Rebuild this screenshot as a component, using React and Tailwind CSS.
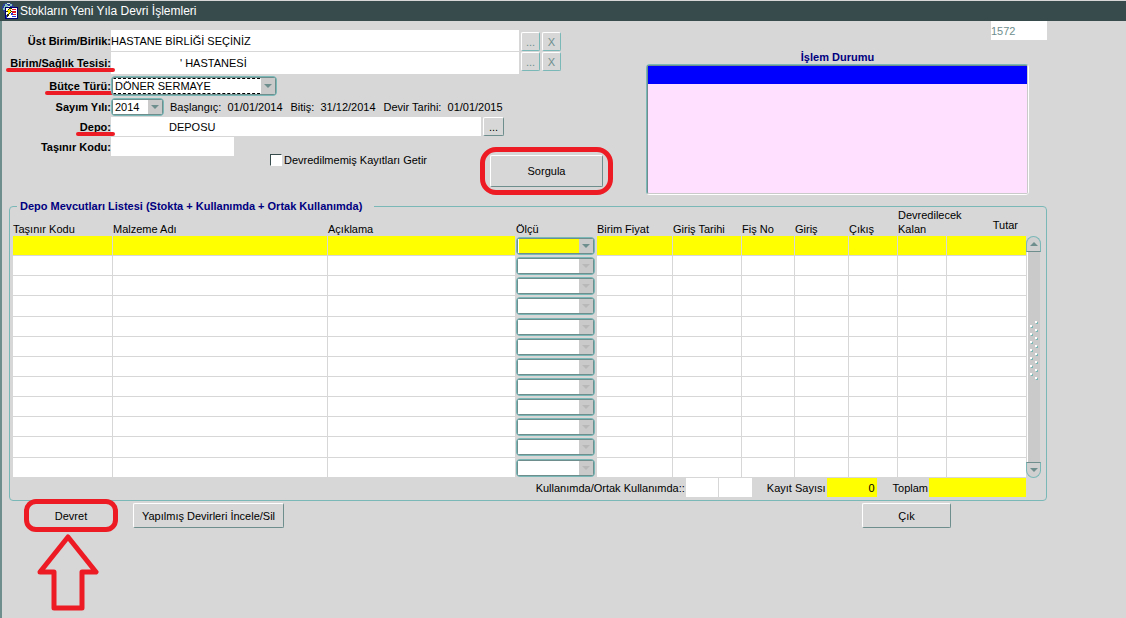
import React, { useState } from 'react'
import clsx from 'clsx'

const columns = [
  { id: 'kod', title: 'Taşınır Kodu', width: 'w-[100px]' },
  { id: 'ad', title: 'Malzeme Adı', width: '' },
  { id: 'aciklama', title: 'Açıklama', width: 'w-[188px]' },
  { id: 'olcu', title: 'Ölçü', width: 'w-[81px]' },
  { id: 'fiyat', title: 'Birim Fiyat', width: 'w-[76px]' },
  { id: 'tarih', title: 'Giriş Tarihi', width: 'w-[69px]' },
  { id: 'fis', title: 'Fiş No', width: 'w-[53px]' },
  { id: 'giris', title: 'Giriş', width: 'w-[54px]' },
  { id: 'cikis', title: 'Çıkış', width: 'w-[49px]' },
  { id: 'kalan', title: 'Devredilecek Kalan', width: 'w-[49px]' },
  { id: 'tutar', title: 'Tutar', width: 'w-[79px]' }
]

const rows = Array.from({ length: 12 }, (_, i) => i)

const AppIcon = () => (
  <svg viewBox="0 0 16 16" className="h-4 w-4 shrink-0" aria-hidden="true" shapeRendering="crispEdges">
    <path d="M3 0h6v1h2v2h1v4H3v3H2V8H1V6H0V3h1V1h2z" fill="#2a3f9c" />
    <path d="M3 1h2v1h1v2H4v1H2V3h1zM1 5h2v2H1zM8 1h2v2H8z" fill="#86c5b8" />
    <path d="M5 0h3v1H5zM6 3h2v1H6z" fill="#d8e8e8" />
    <rect x="3" y="4" width="13" height="12" fill="#000070" />
    <rect x="4" y="5" width="11" height="10" fill="#ffffff" />
    <path d="M10 6h4v1h-4zM10 8h4v2h-4zM11 11h3v1h-3z" fill="#e01828" />
    <path d="M9 10h2v2H9zM10 13h4v1h-4zM4 12h1v3H4z" fill="#2838e0" />
    <path d="M7 5h3v1H9v2h1v1H9v1H8v1H7v2H6v1H5v-3h1V9H4V8h1V7h1V6h1z" fill="#303000" />
    <path d="M7 6h2v1H8v1h1v1H8v1H7v1H6V8H5V7h2z" fill="#ffee00" />
  </svg>
)

const Arrow = ({ up, className }) => (
  <svg viewBox="0 0 8 4" className={clsx('h-1 w-2', className)} aria-hidden="true">
    <path d={up ? 'M0 4h8L4 0z' : 'M0 0h8L4 4z'} fill="currentColor" />
  </svg>
)

const Combo = ({ id, label, options = [], active = true, yellow, focused, className }) => (
  <div className={clsx('relative flex rounded-sm border border-[#7ab8b8] bg-[#6e8e8e] p-px', className)}>
    <select
      id={id}
      aria-label={label}
      disabled={!active}
      className={clsx(
        'w-full appearance-none rounded-none border-l border-white pl-px opacity-100 outline-none',
        yellow ? 'bg-[#ffff00]' : 'bg-white',
        focused && 'border-y border-y-black [border-bottom-style:dashed] [border-top-style:dashed]'
      )}
    >
      {options.map(o => <option key={o}>{o}</option>)}
    </select>
    <span className="pointer-events-none absolute inset-y-px right-px flex w-[14px] items-center justify-center bg-[#cacaca]">
      <Arrow className={active ? 'text-[#6e8e8e]' : 'text-[#b8b8b8]'} />
    </span>
  </div>
)

const Button = ({ children, className, ...rest }) => (
  <button
    type="button"
    className={clsx(
      'shrink-0 rounded-xs border text-center',
      className
    )}
    {...rest}
  >
    {children}
  </button>
)

const raised = 'border-t-white border-l-white border-r-[#6e8e8e] border-b-[#6e8e8e]'

const SmallButton = ({ children, dim, ...rest }) => (
  <Button
    className={clsx(
      'h-[19px] border-t-white border-l-white leading-3',
      dim
        ? 'w-[19px] border-r-[#7ab8b8] border-b-[#7ab8b8] text-[#6e8e8e]'
        : 'w-[21px] border-r-[#6e8e8e] border-b-[#6e8e8e]'
    )}
    {...rest}
  >
    {children}
  </Button>
)

// Red marker frame drawn round an important button
const Highlight = ({ children, className }) => (
  <div className="relative shrink-0">
    {children}
    <span className={clsx('pointer-events-none absolute border-5 border-[#ed1c24]', className)} />
  </div>
)

const Label = ({ htmlFor, marked, children }) => (
  <div className="flex w-[109px] shrink-0 items-center justify-end self-stretch">
    <label htmlFor={htmlFor} className="relative leading-[14px] font-bold whitespace-nowrap">
      {children}
      {marked && <span className="absolute -inset-x-1 -bottom-0.5 h-1 rounded-full bg-[#ed1c24]" />}
    </label>
  </div>
)

const QueryForm = () => {
  const [onlyOpen, setOnlyOpen] = useState(false)

  return (
    <form className="w-[612px] shrink-0 pt-[9px]">
      <div className="flex h-[22px] items-start">
        <Label htmlFor="ust">Üst Birim/Birlik:</Label>
        <input id="ust" defaultValue="HASTANE BİRLİĞİ SEÇİNİZ" className="h-[21px] w-[408px] bg-white outline-none" />
        <div className="mt-0.5 ml-0.5 flex gap-0.5">
          <SmallButton dim disabled aria-label="Üst birim seç">...</SmallButton>
          <SmallButton dim disabled aria-label="Üst birim temizle">X</SmallButton>
        </div>
      </div>
      <div className="flex h-[22px] items-start">
        <Label htmlFor="birim" marked>Birim/Sağlık Tesisi:</Label>
        <input id="birim" defaultValue="' HASTANESİ" className="h-[22px] w-[408px] bg-white pl-[69px] outline-none" />
        <div className="ml-0.5 flex gap-0.5">
          <SmallButton dim disabled aria-label="Birim seç">...</SmallButton>
          <SmallButton dim disabled aria-label="Birim temizle">X</SmallButton>
        </div>
      </div>
      <div className="flex h-[23px] items-center">
        <Label htmlFor="butce" marked>Bütçe Türü:</Label>
        <Combo id="butce" options={['DÖNER SERMAYE']} focused className="h-5 w-[166px]" />
      </div>
      <div className="flex h-5 items-center">
        <Label htmlFor="yil">Sayım Yılı:</Label>
        <Combo id="yil" options={['2014']} className="h-[18px] w-[53px]" />
        <p className="ml-1.5 flex whitespace-pre">
          <span>Başlangıç:  01/01/2014</span>
          <span className="ml-2">Bitiş:  31/12/2014</span>
          <span className="ml-2">Devir Tarihi:  01/01/2015</span>
        </p>
      </div>
      <div className="flex h-5 items-start">
        <Label htmlFor="depo" marked>Depo:</Label>
        <input id="depo" defaultValue="DEPOSU" className="h-[19px] w-[370px] bg-white pl-[58px] outline-none" />
        <div className="ml-0.5 flex">
          <SmallButton aria-label="Depo seç">...</SmallButton>
        </div>
      </div>
      <div className="flex items-start">
        <div className="flex h-5 items-start">
          <Label htmlFor="tasinir">Taşınır Kodu:</Label>
          <input id="tasinir" className="h-[19px] w-[123px] bg-white outline-none" />
        </div>
        <label className="mt-4 ml-9 flex w-[220px] items-center gap-0.5 whitespace-nowrap">
          <input
            type="checkbox"
            checked={onlyOpen}
            onChange={e => setOnlyOpen(e.target.checked)}
            className="h-3 w-3 appearance-none border border-t-[#374b4d] border-r-white border-b-white border-l-[#374b4d] bg-white checked:bg-[#374b4d]"
          />
          Devredilmemiş Kayıtları Getir
        </label>
        <div className="mt-[18px]">
          <Highlight className="-inset-x-2.5 -inset-y-2 rounded-2xl">
            <Button className={clsx('h-8 w-[113px]', raised)}>Sorgula</Button>
          </Highlight>
        </div>
      </div>
    </form>
  )
}

const StatusPanel = () => (
  <div className="flex flex-1 flex-col">
    <input aria-label="Kayıt no" defaultValue="1572" readOnly className="h-[19px] w-14 self-end bg-white text-[#6e8e8e] outline-none" />
    <div className="mt-2.5 mr-[18px]">
      <h2 className="text-center leading-[14px] font-bold text-[#000080]">İşlem Durumu</h2>
      <div className="h-[131px] rounded-sm border border-t-[#7ab8b8] border-r-white border-b-white border-l-[#7ab8b8]">
        <div className="h-full rounded-xs border border-t-[#6e8e8e] border-r-[#cacaca] border-b-[#cacaca] border-l-[#6e8e8e] bg-[#ffe0ff]">
          <div className="h-[18px] bg-[#0000ff]" />
        </div>
      </div>
    </div>
  </div>
)

const ScrollBar = () => (
  <div className="flex w-[15px] shrink-0 flex-col">
    <button type="button" aria-label="Yukarı" className="flex h-4 items-center justify-center rounded-t-full border border-[#7ab8b8] border-b-[#6e8e8e] bg-[#d0d0d0] text-[#6e8e8e]">
      <Arrow up />
    </button>
    <div className="mx-px flex flex-1 items-center justify-center border-l border-white bg-[#cacaca] pb-3">
      <svg viewBox="0 0 8 60" className="h-[60px] w-2" aria-hidden="true" shapeRendering="crispEdges">
        {Array.from({ length: 15 }, (_, i) => (
          <g key={i} transform={`translate(${i % 2 ? 0 : 5} ${i * 4})`}>
            <path d="M1 1h2v2H1z" fill="#7ab8b8" />
            <path d="M0 0h2v2H0z" fill="#fff" />
          </g>
        ))}
      </svg>
    </div>
    <button type="button" aria-label="Aşağı" className="flex h-4 items-center justify-center rounded-b-full border border-[#7ab8b8] border-t-[#6e8e8e] bg-[#d0d0d0] text-[#6e8e8e]">
      <Arrow />
    </button>
  </div>
)

const StockTable = () => (
  <table className="w-full table-fixed border-separate border-spacing-0">
    <colgroup>
      {columns.map(c => <col key={c.id} className={c.width} />)}
    </colgroup>
    <thead>
      <tr className="h-[29px]">
        {columns.map(c => (
          <th
            key={c.id}
            scope="col"
            className={clsx(
              'p-0 align-bottom leading-[14px] font-normal',
              c.id === 'tutar' ? 'pr-2 pb-1 text-right' : 'text-left',
              c.id === 'kalan' ? 'whitespace-normal' : 'whitespace-nowrap'
            )}
          >
            {c.title}
          </th>
        ))}
      </tr>
    </thead>
    <tbody>
      {rows.map(r => (
        <tr key={r} className={r === 3 || r === 10 ? 'h-[21px]' : 'h-5'}>
          {columns.map(c => (
            <td
              key={c.id}
              className={clsx(
                'border-b border-[#d7d7d7] p-0',
                c.id !== 'tutar' && 'border-r',
                c.id === 'olcu' ? 'bg-[#d7d7d7]' : r === 0 ? 'bg-[#ffff00]' : 'bg-white'
              )}
            >
              {c.id === 'olcu' && (
                <Combo label={`Ölçü ${r + 1}`} active={r === 0} yellow={r === 0} className="mr-px h-[18px]" />
              )}
            </td>
          ))}
        </tr>
      ))}
    </tbody>
  </table>
)

const Totals = () => (
  <div className="flex h-[22px] items-start justify-end leading-5">
    <label htmlFor="kullanim">Kullanımda/Ortak Kullanımda::</label>
    <input id="kullanim" className="ml-px h-[19px] w-8 bg-white outline-none" />
    <input aria-label="Ortak Kullanımda" className="ml-px h-[19px] w-[33px] bg-white outline-none" />
    <label htmlFor="sayi" className="ml-[15px]">Kayıt Sayısı</label>
    <input id="sayi" defaultValue="0" className="ml-px h-[19px] w-[50px] bg-[#ffff00] pr-0.5 text-right outline-none" />
    <label htmlFor="toplam" className="ml-4">Toplam</label>
    <input id="toplam" className="ml-px h-[19px] w-[97px] bg-[#ffff00] outline-none" />
  </div>
)

const App = () => (
  <div className="flex min-h-screen flex-col bg-[#d7d7d7] font-['Liberation_Sans',Arial,sans-serif] text-[11px] leading-[14px] text-black">
    <header className="flex h-[21px] items-center gap-0.5 border-t border-[#d7d7d7] bg-[#374b4d] pl-0.5 text-white">
      <AppIcon />
      <h1 className="text-xs">Stokların Yeni Yıla Devri İşlemleri</h1>
    </header>

    <main className="flex-1 border-l-2 border-[#6e8e8e] pr-[79px]">
      <div className="flex gap-8">
        <QueryForm />
        <StatusPanel />
      </div>

      <fieldset className="mt-1 ml-[7px] rounded-sm border border-[#7ab8b8] pl-[3px]">
        <legend className="ml-1 pr-3 pl-[3px] font-bold text-[#000080]">
          Depo Mevcutları Listesi (Stokta + Kullanımda + Ortak Kullanımda)
        </legend>
        <div className="-mt-1.5 mr-[5px] flex">
          <div className="min-w-0 flex-1">
            <StockTable />
            <Totals />
          </div>
          <div className="flex pt-[29px] pb-[22px]">
            <ScrollBar />
          </div>
        </div>
      </fieldset>

      <div className="mt-0.5 flex items-start">
        <div className="ml-[26px] flex flex-col items-center">
          <Highlight className="-inset-x-1 -inset-y-1 rounded-xl">
            <Button className="h-[25px] w-[86px] border-transparent">Devret</Button>
          </Highlight>
          <svg viewBox="0 0 62 77" className="mt-1.5 mr-1.5 h-[77px] w-[62px]" aria-hidden="true">
            <path
              d="M31 3 59 38H45V74H17V38H3Z"
              fill="none"
              stroke="#ed1c24"
              strokeWidth="5"
              strokeLinejoin="round"
            />
          </svg>
        </div>
        <Button className={clsx('ml-[19px] h-[25px] w-[151px]', raised)}>Yapılmış Devirleri İncele/Sil</Button>
        <Button className={clsx('mr-24 ml-auto h-[25px] w-[89px]', raised)}>Çık</Button>
      </div>
    </main>
  </div>
)

export default App
